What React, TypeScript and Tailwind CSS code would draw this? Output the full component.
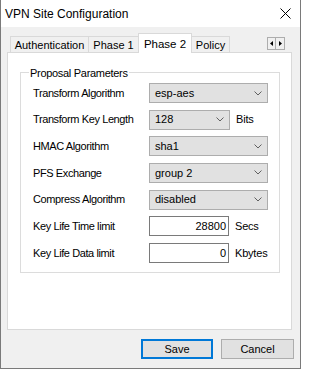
import React from "react";

const font = { fontFamily: '"Liberation Sans", Arial, sans-serif' };

function Chevron() {
  return (
    <svg width="8" height="5" viewBox="0 0 8 5" className="shrink-0">
      <polyline points="0.5,0.5 4,4 7.5,0.5" fill="none" stroke="#606060" strokeWidth="1" />
    </svg>
  );
}

function Combo({ value, width }: { value: string; width: string }) {
  return (
    <div
      className={`${width} h-[20px] flex items-center justify-between bg-[#e1e1e1] border border-[#adadad] pl-[5px] pr-[5px]`}
    >
      <span>{value}</span>
      <Chevron />
    </div>
  );
}

function NumField({ value }: { value: string }) {
  return (
    <div className="w-[80px] h-[20px] flex items-center justify-end bg-white border border-[#7a7a7a] pr-[2px]">
      {value}
    </div>
  );
}

interface Row {
  label: string;
  control: React.ReactNode;
  unit?: string;
}

const rows: Row[] = [
  { label: "Transform Algorithm", control: <Combo value="esp-aes" width="w-[119px]" /> },
  { label: "Transform Key Length", control: <Combo value="128" width="w-[81px]" />, unit: "Bits" },
  { label: "HMAC Algorithm", control: <Combo value="sha1" width="w-[119px]" /> },
  { label: "PFS Exchange", control: <Combo value="group 2" width="w-[119px]" /> },
  { label: "Compress Algorithm", control: <Combo value="disabled" width="w-[119px]" /> },
  { label: "Key Life Time limit", control: <NumField value="28800" />, unit: "Secs" },
  { label: "Key Life Data limit", control: <NumField value="0" />, unit: "Kbytes" },
];

export default function App() {
  return (
    <div
      className="w-[301px] h-[369px] bg-[#f0f0f0] text-black text-[11px] flex flex-col border-l border-r border-b border-[#7a7a7a]"
      style={font}
    >
      {/* title bar */}
      <div className="h-[27px] bg-white flex items-center justify-between pl-[4px] pr-[9px] shrink-0">
        <span className="text-[12px]">VPN Site Configuration</span>
        <svg width="11" height="11" viewBox="0 0 11 11">
          <path d="M0.5 0.5 L10.5 10.5 M10.5 0.5 L0.5 10.5" stroke="#000" strokeWidth="1" />
        </svg>
      </div>

      {/* tab strip */}
      <div className="h-[25px] flex items-end pl-[9px] pr-[15px] shrink-0">
        <div className="w-[78px] h-[16px] border-l border-t border-[#d9d9d9] flex items-center justify-center pt-[1px]">
          Authentication
        </div>
        <div className="w-[50px] h-[16px] border-l border-t border-[#d9d9d9] flex items-center justify-center pt-[1px]">
          Phase 1
        </div>
        <div className="w-[54px] h-[20px] -mb-px relative z-10 bg-white border border-b-0 border-[#d9d9d9] flex items-start justify-center pt-[2px] text-[11.5px]">
          Phase 2
        </div>
        <div className="w-[38px] h-[16px] border-r border-t border-[#d9d9d9] flex items-center justify-center pt-[1px]">
          Policy
        </div>
        <div className="ml-auto mb-[2px] flex">
          <div className="w-[9px] h-[13px] border border-[#adadad] bg-[#f0f0f0] flex items-center justify-center">
            <svg width="3" height="5" viewBox="0 0 3 5">
              <polygon points="3,0 0,2.5 3,5" fill="#000" />
            </svg>
          </div>
          <div className="w-[9px] h-[13px] border border-l-0 border-[#adadad] bg-[#f0f0f0] flex items-center justify-center">
            <svg width="3" height="5" viewBox="0 0 3 5">
              <polygon points="0,0 3,2.5 0,5" fill="#000" />
            </svg>
          </div>
        </div>
      </div>

      {/* tab page */}
      <div className="ml-[6px] w-[285px] h-[278px] bg-white border border-[#d9d9d9] shrink-0">
        <div className="relative mt-[19px] ml-[12px] w-[260px] border border-[#dcdcdc] pt-[10px] pb-[9px] pl-[12px]">
          <span className="absolute -top-[8px] left-[8px] bg-white px-px tracking-[-0.3px]">
            Proposal Parameters
          </span>
          <div className="flex flex-col gap-[6.67px]">
            {rows.map((r) => (
              <div key={r.label} className="flex items-center h-[20px]">
                <span className="w-[116px] tracking-[-0.4px]">{r.label}</span>
                {r.control}
                {r.unit && <span className="ml-[6px] tracking-[-0.2px]">{r.unit}</span>}
              </div>
            ))}
          </div>
        </div>
      </div>

      {/* buttons */}
      <div className="flex justify-end gap-[8px] mt-[9px] pr-[6px]">
        <button className="w-[72px] h-[20px] bg-[#e1e1e1] border-2 border-[#0078d7] flex items-center justify-center">
          Save
        </button>
        <button className="w-[73px] h-[20px] bg-[#e1e1e1] border border-[#adadad] flex items-center justify-center">
          Cancel
        </button>
      </div>
    </div>
  );
}
